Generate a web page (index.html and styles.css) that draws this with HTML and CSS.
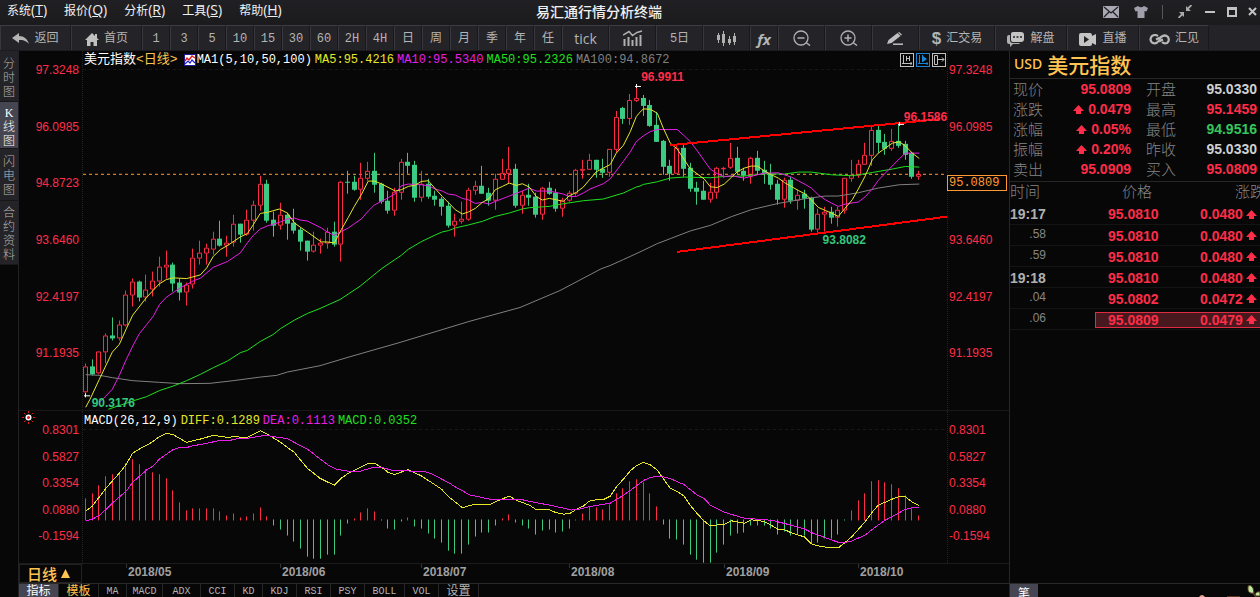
FILE: index.html
```html
<!DOCTYPE html>
<html lang="zh-CN">
<head>
<meta charset="utf-8">
<title>易汇通行情分析终端</title>
<link rel="stylesheet" href="styles.css">
</head>
<body>
<svg class="defs" aria-hidden="true"><symbol id="up" viewBox="0 0 11 9"><path d="M5.500 0 11 6H8V9H3V6H0z" fill="currentColor"/></symbol></svg>
<header class="menubar">
  <nav class="menu">
    <button>系统<span>(<u>T</u>)</span></button>
    <button>报价<span>(<u>Q</u>)</span></button>
    <button>分析<span>(<u>R</u>)</span></button>
    <button>工具<span>(<u>S</u>)</span></button>
    <button>帮助<span>(<u>H</u>)</span></button>
  </nav>
  <h1 class="app-title">易汇通行情分析终端</h1>
  <div class="window-tools">
    <button class="w-mail" aria-label="邮件"><svg width="16" height="12" viewBox="0 0 16 12"><rect width="16" height="12" rx="1" fill="#a9a9b4"/><path d="M1 1l7 6 7-6M1 11l5-5M15 11l-5-5" fill="none" stroke="#222226" stroke-width="1.300"/></svg></button>
    <button class="w-skin" aria-label="皮肤"><svg width="14" height="12" viewBox="0 0 14 12"><path d="M4 0Q7 2.500 10 0L14 2 12.500 5.500 10.500 5V12H3.500V5L1.500 5.500 0 2z" fill="#a09fab"/></svg></button>
    <i class="w-sep"></i>
    <button class="w-restore" aria-label="还原"><svg width="14" height="13" viewBox="0 0 14 13"><path d="M13.500 0 9.500 4M.5 13l4-4" stroke="#aaa" stroke-width="1.800"/><path d="M8 1v5h5zM1 7h5v5z" fill="#aaa"/></svg></button>
    <button class="w-min" aria-label="最小化"><svg width="10" height="2"><rect width="10" height="2" fill="#c2c2c2"/></svg></button>
    <button class="w-max" aria-label="最大化"><svg width="10" height="10"><path d="M1 0v10M9 0v10M0 9h10" stroke="#c2c2c2" stroke-width="2"/><path d="M0 1.500h10" stroke="#c2c2c2" stroke-width="3"/></svg></button>
    <button class="w-close" aria-label="关闭"><svg width="9" height="9"><path d="M1 1l7 7M8 1L1 8" stroke="#c2c2c2" stroke-width="2"/></svg></button>
  </div>
</header>

<div class="toolbar">
  <button class="b-nav"><svg width="17" height="12" viewBox="0 0 17 12"><path d="M0 5 7 0V3C12 3 15.500 6 17 11 14 7.500 11 7 7 7V10z" fill="#b4b4b4"/></svg>返回</button>
  <button class="b-nav"><svg width="14" height="13" viewBox="0 0 14 13"><path d="M7 0 0 7H2V13H5.500V9H8.500V13H12V7H14L12 5V1H10V3z" fill="#c0c0c0"/></svg>首页</button>
  <button>1</button><button>3</button><button>5</button><button>10</button><button>15</button><button>30</button><button>60</button><button>2H</button><button>4H</button>
  <button class="zh">日</button><button class="zh">周</button><button class="zh">月</button><button class="zh">季</button><button class="zh">年</button><button class="zh">任</button>
  <button class="b-mid tick">tick</button>
  <button class="b-mid" aria-label="成交量"><svg width="20" height="16" viewBox="0 0 20 16"><path d="M1.500 16V9M5.500 16V7M9.500 16V10M13.500 16V7M17.500 16V5" stroke="#b0b0b0" stroke-width="2"/><path d="M0 5 6 1.500 9.500 5.500 14 2.500 19 1" fill="none" stroke="#b0b0b0" stroke-width="1.500"/></svg></button>
  <button class="b-mid zh">5日</button>
  <button class="b-mid" aria-label="K线"><svg width="19" height="15" viewBox="0 0 19 15"><path d="M1.500 2v10M6.500 0v15M12.500 5v9M17.500 2v12" stroke="#b0b0b0"/><path d="M1.500 4v5M6.500 3v9M12.500 8v4M17.500 5v6" stroke="#b0b0b0" stroke-width="3"/></svg></button>
  <button class="fx">fx</button>
  <button class="b-mid" aria-label="缩小"><svg width="18" height="16" viewBox="0 0 18 16"><circle cx="8" cy="8" r="7" fill="none" stroke="#b0b0b0" stroke-width="1.300"/><path d="M4.500 8h7M13 12.500l4 3" stroke="#b0b0b0" stroke-width="1.500"/></svg></button>
  <button class="b-mid" aria-label="放大"><svg width="18" height="16" viewBox="0 0 18 16"><circle cx="8" cy="8" r="7" fill="none" stroke="#b0b0b0" stroke-width="1.300"/><path d="M4.500 8h7M8 4.500v7M13 12.500l4 3" stroke="#b0b0b0" stroke-width="1.500"/></svg></button>
  <button class="b-mid" aria-label="画线"><svg width="17" height="13" viewBox="0 0 17 13"><path d="M0 12 1.500 8 10.500 1 13.500 4 4.500 11z" fill="#c0c0c0"/><path d="M11 .5 12 0 15 2.500 14 3.500z" fill="#c0c0c0"/><path d="M6 12.200h10" stroke="#c0c0c0" stroke-width="1.500"/></svg></button>
  <button class="b-trade"><b class="dollar">$</b>汇交易</button>
  <button class="b-link"><svg width="18" height="15" viewBox="0 0 18 15"><path d="M3 3H2Q0 3 0 5v5q0 2 2 2h1v3l3-3h5q2 0 2-1H6Q3 11 3 8z" fill="#b0b0b0"/><path d="M6 0h8q3 0 3 3v4q0 3-3 3h-3l-2 0H6Q4 10 4 8V2Q4 0 6 0z" fill="#c4c4c4"/><path d="M6 5h2M9.500 5h2M13 5h2" stroke="#222" stroke-width="1.500"/></svg>解盘</button>
  <button class="b-link"><svg width="18" height="13" viewBox="0 0 18 13"><path d="M0 2q0-2 2-2h9q2 0 2 2v1l4-2v11l-4-2v1q0 2-2 2H2q-2 0-2-2z" fill="#c4c4c4"/><path d="M5 3v7l5-3.500z" fill="#222227"/></svg>直播</button>
  <button class="b-last"><svg width="21" height="11" viewBox="0 0 21 11"><path d="M9 2Q6 0 3 2 0 5.500 3 8.500 7 11 10 6.500L12 3q4-3 7 0 2 4-1 6-3 1-5-1" fill="none" stroke="#b8b8b8" stroke-width="2.200"/><path d="M7 5.500l4-2M10 7.500l4-2" stroke="#b8b8b8" stroke-width="2"/></svg>汇见</button>
</div>

<div class="workspace">
  <nav class="side-tabs">
    <button class="s1">分时图</button>
    <button class="s2 active">K线图</button>
    <button class="s3">闪电图</button>
    <button class="s4">合约资料</button>
  </nav>

  <main class="charts">
    <section class="pane pane-price">
      <div class="axis axis-left"><span>97.3248</span><span>96.0985</span><span>94.8723</span><span>93.6460</span><span>92.4197</span><span>91.1935</span></div>
      <div class="plot">
        <div class="legend">
          <span class="instrument">美元指数<em>&lt;日线&gt;</em></span>
          <svg class="legend-icon" width="12" height="12" viewBox="0 0 12 12"><rect width="12" height="12" fill="#1a1a9c"/><rect x="1" y="1" width="10" height="10" fill="#fff"/><path d="M1 7 3 4 5 6 8 2 11 4" fill="none" stroke="#e02020" stroke-width="1.400"/><path d="M1 10 4 7 6 9 8 6 11 9" fill="none" stroke="#2020d0" stroke-width="1.200"/></svg>
          <span class="c-white">MA1(5,10,50,100)</span><span class="c-yellow">MA5:95.4216</span><span class="c-magenta">MA10:95.5340</span><span class="c-green">MA50:95.2326</span><span class="c-gray">MA100:94.8672</span>
          <div class="scale-tools">
            <button aria-label="纵轴"><svg width="14" height="14" viewBox="0 0 14 14"><rect x=".5" y=".5" width="13" height="13" fill="none" stroke="#c0c0c0"/><path d="M3.500 2v9M2 10.500h10M6.500 3v5M9.500 3v5M6 5.500h4M11 9v3" stroke="#c0c0c0"/></svg></button>
            <button aria-label="锁定"><svg width="14" height="14" viewBox="0 0 14 14"><rect x=".5" y=".5" width="13" height="13" fill="none" stroke="#1b86d8"/><path d="M3.500 2v9M2 10.500h10M11 9v3M6.500 2v7" stroke="#1b86d8"/><path d="M7 3v6l4-3z" fill="#1b86d8"/></svg></button>
            <button aria-label="平移"><svg width="14" height="14" viewBox="0 0 14 14"><rect x=".5" y=".5" width="13" height="13" fill="none" stroke="#c0c0c0"/><path d="M2.500 2.500h3v9h-3zM5 6.500h7M10 4.500l2 2-2 2" fill="none" stroke="#c0c0c0"/></svg></button>
          </div>
        </div>
        <div class="canvas">
          <svg id="price" viewBox="83 68 864 343" preserveAspectRatio="none"></svg>
          <span class="mark m-high">96.9911</span>
          <span class="mark m-recent">96.1586</span>
          <span class="mark m-dip">93.8082</span>
          <span class="mark m-low">90.3176</span>
        </div>
      </div>
      <div class="axis axis-right"><span>97.3248</span><span>96.0985</span><output class="last-price">95.0809</output><span>93.6460</span><span>92.4197</span><span>91.1935</span></div>
    </section>

    <section class="pane pane-macd">
      <div class="axis axis-left">
        <svg class="sun" width="13" height="13" viewBox="0 0 13 13"><path d="M6.500 0v2M6.500 11v2M0 6.500h2M11 6.500h2M2 2l1.500 1.500M9.500 9.500 11 11M11 2 9.500 3.500M3.500 9.500 2 11" stroke="#e01818"/><circle cx="6.500" cy="6.500" r="3" fill="#fff"/><circle cx="6.500" cy="6.500" r="1.500" fill="#e01818"/></svg>
        <span>0.8301</span><span>0.5827</span><span>0.3354</span><span>0.0880</span><span>-0.1594</span></div>
      <div class="plot">
        <div class="legend"><span class="c-white">MACD(26,12,9)</span><span class="c-yellow">DIFF:0.1289</span><span class="c-magenta">DEA:0.1113</span><span class="c-green">MACD:0.0352</span></div>
        <div class="canvas"><svg id="macd" viewBox="83 430 864 133" preserveAspectRatio="none"></svg></div>
      </div>
      <div class="axis axis-right"><span>0.8301</span><span>0.5827</span><span>0.3354</span><span>0.0880</span><span>-0.1594</span></div>
    </section>

    <div class="time-row">
      <button class="period">日线 <svg width="9" height="9" viewBox="0 0 9 9"><path d="M4.500 0 9 9H0z" fill="#ffc452"/></svg></button>
      <div class="months"><i></i><span>2018/05</span><span>2018/06</span><span>2018/07</span><span>2018/08</span><span>2018/09</span><span>2018/10</span></div>
    </div>

    <nav class="indicator-tabs">
      <button class="wide active">指标</button><button class="wide gold">模板</button><button class="t2">MA</button><button class="t4">MACD</button><button class="t3a">ADX</button><button class="t3">CCI</button><button class="t2">KD</button><button class="t3">KDJ</button><button class="t3">RSI</button><button class="t3">PSY</button><button class="wide">BOLL</button><button class="t3">VOL</button><button class="wide zh">设置</button>
    </nav>
  </main>

  <aside class="quote">
    <h2><small>USD</small>美元指数</h2>
    <dl class="facts">
      <dt>现价</dt><dd class="up">95.0809</dd><dt>开盘</dt><dd>95.0330</dd>
      <dt>涨跌</dt><dd class="up"><svg width="11" height="9"><use href="#up"/></svg>0.0479</dd><dt>最高</dt><dd class="up">95.1459</dd>
      <dt>涨幅</dt><dd class="up"><svg width="11" height="9"><use href="#up"/></svg>0.05%</dd><dt>最低</dt><dd class="down">94.9516</dd>
      <dt>振幅</dt><dd class="up"><svg width="11" height="9"><use href="#up"/></svg>0.20%</dd><dt>昨收</dt><dd>95.0330</dd>
      <dt>卖出</dt><dd class="up">95.0909</dd><dt>买入</dt><dd class="up">95.0809</dd>
    </dl>
    <table class="ticks">
      <thead><tr><th class="col-time">时间</th><th class="col-price">价格</th><th class="col-change">涨跌</th></tr></thead>
      <tbody>
        <tr><td class="minute">19:17</td><td><div>95.0810</div></td><td><div>0.0480<svg width="11" height="9"><use href="#up"/></svg></div></td></tr>
        <tr><td class="second">.58</td><td><div>95.0810</div></td><td><div>0.0480<svg width="11" height="9"><use href="#up"/></svg></div></td></tr>
        <tr><td class="second">.59</td><td><div>95.0810</div></td><td><div>0.0480<svg width="11" height="9"><use href="#up"/></svg></div></td></tr>
        <tr><td class="minute">19:18</td><td><div>95.0810</div></td><td><div>0.0480<svg width="11" height="9"><use href="#up"/></svg></div></td></tr>
        <tr><td class="second">.04</td><td><div>95.0802</div></td><td><div>0.0472<svg width="11" height="9"><use href="#up"/></svg></div></td></tr>
        <tr class="latest"><td class="second">.06</td><td><div>95.0809</div></td><td><div>0.0479<svg width="11" height="9"><use href="#up"/></svg></div></td></tr>
      </tbody>
    </table>
    <footer class="quote-tabs">
      <button>笔</button>
      <svg width="62" height="13" viewBox="0 0 62 13"><path d="M1 13q3-4 6 0z" fill="#f0a090"/><path d="M29 13v-1h13v1z" fill="#5b3418"/><path d="M50 2q3-2 5 2l1 5q-5 1-6-3zM57 10q2-3 5-2v4h-4z" fill="#bfe8a0" stroke="#5d4020"/><path d="M55 9l3 4" stroke="#5d4020" stroke-width="1.500"/></svg>
    </footer>
  </aside>
</div>
<script src="chart.js"></script>
</body>
</html>
```

FILE: styles.css
```css
* { box-sizing: border-box; }
body {
  margin: 0;
  height: 100vh;
  display: flex;
  flex-direction: column;
  overflow: hidden;
  background: #070707;
  color: #b4b4b4;
  font: 12px/16px "Liberation Sans", "Noto Sans CJK SC", sans-serif;
}
button {
  margin: 0;
  padding: 0;
  border: 0;
  background: none;
  color: inherit;
  font: inherit;
  white-space: nowrap;
}
svg { display: block; flex: none; }
.defs { position: absolute; width: 0; height: 0; }

/* menu bar */
.menubar {
  display: grid;
  grid-template-columns: 1fr auto 1fr;
  flex: 0 0 25px;
  align-items: start;
  background: linear-gradient(#202024, #1b1b1d);
  color: #f0f0f0;
}
.menu { display: flex; gap: 17px; padding-left: 7px; }
.menu button { font: 12px/20px "Noto Sans CJK SC", sans-serif; }
.menu span { font: 14px/20px "Open Sans", sans-serif; }
.app-title {
  margin: 0;
  padding-right: 62px;
  font: 500 14px/22px "Noto Sans CJK SC", sans-serif;
}
.window-tools { display: flex; justify-content: flex-end; align-items: center; height: 23px; }
.window-tools button { display: flex; justify-content: center; align-items: center; height: 20px; }
.w-mail { width: 31px; }
.w-skin { width: 29px; }
.w-sep { width: 1px; height: 14px; margin: 0 7px; background: #55555c; }
.w-restore { width: 30px; }
.w-min { width: 20px; }
.w-max { width: 24px; }
.w-close { width: 16px; }

/* toolbar */
.toolbar { display: flex; flex: 0 0 26px; background: #232328; border-bottom: 1px solid #1c1c20; }
.toolbar button {
  display: flex;
  flex: none;
  justify-content: center;
  align-items: center;
  gap: 5px;
  width: 28px;
  border-top: 1px solid #3d3d43;
  border-left: 1px solid #37373d;
  border-right: 1px solid #19191d;
  color: #b4b4b4;
  font: 12px/20px "Liberation Mono", "Noto Sans CJK SC", monospace;
}
.toolbar button:not([aria-label]) { padding-top: 2px; }
.toolbar .b-nav { width: 71px; }
.toolbar .b-mid { width: 47px; }
.toolbar .b-trade { width: 76px; }
.toolbar .b-link { width: 72px; }
.toolbar .b-last { width: 70px; }
.toolbar .tick { font: 14px/20px "Open Sans", sans-serif; }
.toolbar .fx { font: italic bold 15px/18px "Noto Sans", sans-serif; }
.dollar { font: bold 17px/20px "Liberation Sans", sans-serif; }

.workspace { display: flex; flex: 1; min-height: 0; }

/* left tabs */
.side-tabs { display: flex; flex-direction: column; flex: 0 0 19px; border-right: 1px solid #222226; }
.side-tabs button {
  padding: 3px 3px 0;
  background: #232328;
  border-bottom: 1px solid #17171a;
  color: #b4b4b4;
  font: 300 12px/14px "Liberation Serif", "Noto Sans CJK SC", sans-serif;
  white-space: normal;
  word-break: break-all;
}
.s1 { height: 51px; }
.s2 { height: 47px; }
.s3 { height: 52px; }
.s4 { height: 64px; }
.side-tabs .active { background: #464652; color: #fff; }

/* charts */
.charts { display: flex; flex-direction: column; flex: 1; min-width: 0; }
.pane { display: grid; grid-template-columns: 64px 1fr 62px; min-height: 0; }
.pane-price { flex: 360; }
.pane-macd { flex: 152; border-top: 1px solid #171717; }
.axis {
  position: relative;
  display: flex;
  flex-direction: column;
  justify-content: space-between;
  color: #ff2d48;
}
.pane-price .axis { padding-top: 11px; padding-bottom: 49px; }
.pane-macd .axis { padding-top: 11px; padding-bottom: 19px; }
.axis-left { padding-right: 3px; text-align: right; border-right: 1px dotted #242424; }
.axis-right { padding-left: 1px; border-left: 1px dotted #242424; }
.last-price {
  margin: 0 2px 0 -2px;
  padding-left: 1px;
  border: 1px solid #ff9933;
  color: #ff9933;
  font: 12px/14px "Liberation Mono", monospace;
}
.sun { position: absolute; left: 3px; top: 0; }
.plot { display: flex; flex-direction: column; min-width: 0; min-height: 0; }
.legend {
  display: flex;
  flex: 0 0 17px;
  align-items: center;
  gap: 3px;
  padding-left: 1px;
  white-space: nowrap;
  font: 12px/16px "Liberation Mono", "Noto Sans CJK SC", monospace;
}
.pane-price .legend { padding-top: 1px; }
.pane-macd .legend { flex-basis: 18px; padding-top: 2px; }
.instrument { color: #fff; font-size: 13px; margin-right: 3px; }
.instrument em { color: #ffc452; font-style: normal; }
.legend-icon { margin-right: -2px; }
.c-white { color: #fff; }
.c-yellow { color: #e6e62a; }
.c-magenta { color: #e61ee6; }
.c-green { color: #1ee01e; }
.c-gray { color: #808080; }
.scale-tools { display: flex; gap: 2px; margin-left: auto; padding-right: 1px; }
.canvas { position: relative; flex: 1; min-height: 0; }
.canvas svg { width: 100%; height: 100%; }
.canvas svg * { vector-effect: non-scaling-stroke; }
.mark { position: absolute; font-weight: bold; line-height: 12px; color: #ff2d48; }
.m-high { left: 64.600%; top: 1%; }
.m-recent { left: 95%; top: 12.500%; }
.m-dip { left: 85.600%; top: 48.500%; color: #35c67c; }
.m-low { left: 1%; top: 96%; color: #35c67c; }

.time-row { display: flex; flex: 0 0 20px; border-top: 1px solid #1b1b1b; }
.period {
  display: flex;
  flex: 0 0 63px;
  align-items: center;
  gap: 4px;
  padding-left: 7px;
  margin-right: 1px;
  border: 1px solid #222;
  color: #ffc452;
  font: 500 15px/14px "Noto Sans CJK SC", sans-serif;
}
.months {
  display: grid;
  flex: 1;
  grid-template-columns: 43fr 154fr 141fr 148fr 155fr 134fr 151fr;
  color: #a0a0a0;
  font-weight: bold;
}
.months span { padding-left: 2px; background: linear-gradient(#333, #333) no-repeat left top / 1px 4px; }

.indicator-tabs { display: flex; flex: 0 0 14px; overflow: hidden; border-top: 1px solid #2a2a2a; }
.indicator-tabs button {
  flex: none;
  height: 16px;
  border-right: 1px solid #262626;
  color: #b4b4b4;
  font: 10px/16px "Liberation Mono", "Noto Sans CJK SC", monospace;
}
.indicator-tabs .wide { width: 40px; }
.indicator-tabs .t2 { width: 28px; }
.indicator-tabs .t3 { width: 34px; }
.indicator-tabs .t3a { width: 38px; }
.indicator-tabs .t4 { width: 36px; }
.indicator-tabs .active, .indicator-tabs .gold, .indicator-tabs .zh { font-size: 12px; }
.indicator-tabs .active { background: #464652; color: #fff; }
.indicator-tabs .gold { color: #ffc452; }

/* quote panel */
.quote { display: flex; flex-direction: column; flex: 0 0 251px; overflow: hidden; border-left: 1px solid #262626; }
.quote h2 {
  display: flex;
  gap: 5px;
  margin: 0;
  padding-left: 4px;
  border-bottom: 1px solid #262626;
  color: #ffc452;
  font: 500 21px/27px "Noto Sans CJK SC", sans-serif;
}
.quote small { font: 500 14px/26px "Noto Sans", sans-serif; }
.facts {
  display: grid;
  grid-template-columns: 36px 82px 47px 1fr;
  grid-auto-rows: 20px;
  margin: 0;
  padding: 0 3px 2px;
  border-bottom: 1px solid #262626;
}
.facts dt { color: #858585; font: 300 15px/19px "Noto Sans CJK SC", sans-serif; }
.facts dt:nth-of-type(even) { padding-left: 15px; }
.facts dd {
  display: flex;
  justify-content: flex-end;
  align-items: center;
  gap: 4px;
  margin: 0;
  color: #d0d0d0;
  font: bold 14px/22px "Liberation Sans", sans-serif;
}
.facts .up { color: #ff2d48; }
.facts .down { color: #35c65c; }
.ticks { width: 275px; border-collapse: collapse; table-layout: fixed; }
.ticks th { height: 21px; padding: 0; color: #858585; text-align: left; vertical-align: top; font: 300 15px/18px "Noto Sans CJK SC", sans-serif; }
.ticks .col-time { width: 85px; }
.ticks .col-price { width: 92px; padding-left: 27px; }
.ticks .col-change { padding-left: 48px; }
.ticks td {
  height: 21px;
  padding: 2px 0 0;
  border-bottom: 1px solid #141414;
  color: #ff2d48;
  font: bold 14px/14px "Liberation Sans", sans-serif;
}
.ticks td div { display: flex; align-items: center; gap: 3px; height: 16px; padding-left: 12px; border: 1px solid transparent; }
.ticks .minute { color: #b0b0b0; }
.ticks .second { padding: 0 49px 2px 0; color: #858585; text-align: right; font: 12px/14px "Liberation Sans", sans-serif; }
.ticks .latest td div { background: #47191f; border-color: #e02c42; border-left-width: 0; border-right-width: 0; }
.ticks .latest td:nth-child(2) div { border-left-width: 1px; }
.ticks .latest td:nth-child(3) div { padding-left: 13px; }
.quote-tabs { display: flex; justify-content: space-between; height: 14px; margin-top: auto; overflow: hidden; border-top: 1px solid #2a2a2a; }
.quote-tabs button { width: 28px; height: 17px; background: #464652; color: #fff; font: 12px/16px "Noto Sans CJK SC", sans-serif; }
```

FILE: chart.js
```js
// Chart geometry is kept in thirds of a unit; each run has its own origin.
const RED = '#ff2d48', GREEN = '#3ccb82';
const NS = 'http://www.w3.org/2000/svg';
const slot = i => Math.round(85 + i * 6.718) + 0.5;

function add(svg, tag, attrs) {
  const el = document.createElementNS(NS, tag);
  for (const k in attrs) el.setAttribute(k, attrs[k]);
  svg.appendChild(el);
}
function line(svg, color, runs, width = 1) {
  const pts = runs.map(([ox, oy, s]) => s.trim().split(' ').map(p => {
    const [x, y] = p.split(',').map(Number);
    return (ox + x / 3).toFixed(1) + ',' + (oy + y / 3).toFixed(1);
  }).join(' ')).join(' ');
  add(svg, 'polyline', { points: pts, fill: 'none', stroke: color, 'stroke-width': width, 'shape-rendering': 'crispEdges' });
}
function rule(svg, x1, y1, x2, y2, color, width, dash) {
  const a = { x1, y1, x2, y2, stroke: color, 'stroke-width': width };
  if (dash) a['stroke-dasharray'] = dash;
  add(svg, 'line', a);
}

// high, low, body top, body bottom, direction
const candles = [
  [50, `942 1035 951 1028 R|930 978 951 975 G|906 975 906 973 R|852 942 858 908 R|803 872 857 866 G|813 872 825 866 R|723 830 736 827 R|687 770 696 738 R|693 755 696 743 G|675 755 720 743 R|666 740 693 721 R|621 710 651 695 R|603 687 645 653 R|639 727 645 701 G|687 752 699 728 G|700 768 706 728 R|597 717 625 706 R|573 645 609 626 R|582 645 594 611 R|546 615 567 599 R|513 590 567 588 G|558 621 579 587 R|495 591 522 580 R|522 578 522 555 G|480 557 510 554 R|453 543 465 512 R|378 483 402 467 R|390 518 402 512 G|487 560 510 527 G|459 540 495 528 R|490 570 495 521 G|477 551 519 543 G|535 603 540 575 G|573 632 573 605 G|546 608 585 605 R`],
  [70, `507 552 518 527 R|474 537 486 521 R|456 530 486 525 G|333 576 336 524 R|303 372 336 338 G|318 363 336 360 G|279 390 324 359 R|276 333 303 326 R|249 369 303 345 G|339 402 342 396 G|363 432 393 423 G|354 438 366 422 R|267 390 276 368 R|249 312 276 288 G|273 396 285 384 G|303 396 342 383 R|327 387 342 381 G|363 408 378 390 G|381 438 387 411 G|396 474 408 468 G|432 501 453 467 R|396 462 447 455 R|354 453 360 450 R|333 375 348 362 R|288 372 348 372 G|354 408 369 393 G|312 420 327 392 R|267 330 309 329 R|231 342 297 311 R|282 414 297 408 G|363 432 375 407 R|342 408 375 384 G|369 444 381 435 G|351 450 354 434 R|336 375 354 372 G|357 426 369 417 G|384 441 390 416 R|363 396 369 392 R|297 378 300 371 R|270 327 298 302 R|252 300 270 299 R|270 324 270 300 G|267 324 297 309 G|237 321 237 308 R|123 249 141 239 R|111 162 114 147 G|72 165 90 146 R|45 96 84 92 R`],
  [60, `105 168 114 138 G|120 201 135 198 G|156 246 195 246 G|240 345 243 321 G|300 363 318 342 G|255 343 264 341 R|252 351 264 327 G|309 396 324 387 G|366 435 384 396 G|363 420 393 420 G|369 429 396 419 R|321 417 324 398 R|321 354 324 326 R|249 327 294 325 R|261 345 294 336 G|324 363 333 348 G|291 372 294 350 R|273 345 294 333 G|303 372 330 342 G|312 390 342 375 G|360 435 372 420 G|354 444 360 419 R|351 432 360 424 G|390 450 405 422 R|390 447 402 417 G|411 516 414 510 G|447 518 462 509 R|441 516 456 464 R|441 492 456 474 G|441 501 450 473 R|354 462 354 452 R|300 366 345 356 R|300 354 312 347 R|249 315 285 314 R|198 318 210 287 R|198 279 210 249 G|222 285 246 267 G|207 273 243 266 R|195 264 243 258 G|243 300 252 285 G|276 357 279 351 G|333 360 342 350 R`]
];

const price = document.getElementById('price');
rule(price, 83, 69.5, 947, 69.5, '#191919', 1, '3 3');
rule(price, 83, 174.5, 947, 174.5, '#ff9933', 1, '3 3');
let n = 0;
for (const [oy, text] of candles) {
  for (const row of text.split('|')) {
    const f = row.split(' '), x = slot(n++);
    const [hi, lo, top, bot] = f.slice(0, 4).map(v => Math.round(oy + v / 3));
    const h = Math.max(bot - top, 1);
    if (f[4] === 'R') {
      rule(price, x, hi, x, top, RED, 1);
      rule(price, x, top + h, x, lo, RED, 1);
      add(price, 'rect', { x: x - 2, y: top + 0.5, width: 4, height: Math.max(h - 1, 0.5), fill: 'none', stroke: RED });
    } else {
      rule(price, x, hi, x, lo, GREEN, 1);
      add(price, 'rect', { x: x - 2.5, y: top, width: 5, height: h, fill: GREEN });
    }
  }
}
line(price, '#808080', [
  [0, 50, '257,976 300,978 337,985 398,994 478,999 540,1003 630,1002 700,994 781,983 830,978 862,968 960,949 1050,922 1200,879 1410,815 1560,774 1680,723'],
  [300, 70, '903,598 930,588 970,570 1020,547'],
  [620, 60, '112,552 151,537 211,514 271,497 334,471 394,450 475,431 556,417 616,409 655,409 715,399 775,385 838,375 898,373']]);
line(price, '#1ee01e', [
  [0, 50, '325,1080 398,1055 440,1042 478,1024 520,1010 560,994 601,975 640,955 682,935 721,910 742,903 781,876 820,855 841,838 883,812 922,792 960,777'],
  [300, 70, '120,690 180,650 244,598 286,569 304,557 325,539 364,516 406,496 427,487 445,483 466,475 505,466 547,455 586,440 628,430 667,418 688,414 748,410 790,402 850,393 910,388 970,370 1009,352 1020,349'],
  [620, 60, '70,374 112,366 151,355 193,352 271,354 313,350 373,349 433,342 493,343 535,337 574,337 634,345 697,348 757,338 817,328 856,320 898,322']]);
line(price, '#e61ee6', [
  [0, 50, '300,1058 337,1020 358,978 379,930 398,890 418,853 440,825 460,800 478,766 499,743 541,715 580,694 601,686 640,653 682,636 721,610 742,580 760,557 781,538 802,529 841,517 862,508 883,505'],
  [300, 70, '0,451 22,454 64,475 82,487 103,497 124,486 145,475 184,448 205,424 223,406 265,384 286,372 304,348 325,343 364,345 385,348 406,358 427,364 445,373 466,376 487,386 505,390 526,401 547,398 568,403 586,395 628,379 667,364 688,355 709,364 748,364 790,373 808,380 829,380 850,370 870,358 910,342 931,327 949,303 970,275 991,246 1009,215'],
  [620, 60, '70,228 91,215 112,209 172,209 193,228 211,245 232,273 253,303 271,328 292,342 313,351 334,348 373,355 412,345 433,340 475,339 493,345 514,352 535,363 556,374 574,385 595,405 616,420 634,430 655,440 676,433 715,427 736,411 757,387 775,362 796,340 838,297 856,280 898,280']]);
line(price, '#e6e62a', [
  [0, 50, '257,1074 270,1050 298,990 337,908 358,885 379,838 398,797 440,743 478,703 499,690 520,685 560,687 601,676 620,655 640,620 661,600 682,588 721,562 742,552 760,525 781,491 802,488 838,478 862,490 883,519'],
  [300, 70, '0,472 22,487 64,517 82,517 103,520 124,480 145,443 163,410 184,375 205,334 223,334 244,342 286,364 304,360 325,350 346,346 364,335 385,333 406,357 427,380 445,398 466,420 487,433 505,427 526,416 547,398 568,386 586,360 607,350 628,340 649,347 667,342 688,352 709,380 727,391 748,386 769,390 790,395 808,378 829,368 850,352 889,306 931,284 949,250 970,227 991,185 1009,140'],
  [620, 60, '60,157 70,147 91,148 112,160 130,205 151,250 172,268 193,300 211,327 253,358 271,381 292,383 313,373 334,353 352,336 373,325 394,319 412,319 433,333 454,345 475,355 493,368 514,380 535,392 556,403 574,420 595,443 616,452 634,460 655,470 676,445 697,420 715,388 736,348 757,300 775,280 796,265 817,250 838,246 856,258 877,280 898,296']]);
line(price, '#ff0000', [[620, 60, '150,256 960,178']], 2);
line(price, '#ff0000', [[620, 60, '172,577 980,471']], 2);
for (const [x, y] of [[636, 86], [899, 124], [85, 396]]) {
  rule(price, x - 1, y + 0.5, x + 5, y + 0.5, '#fff', 1);
  rule(price, x + 0.5, y - 2, x + 0.5, y + 2, '#fff', 1);
}

const macd = document.getElementById('macd');
rule(macd, 83, 430.5, 947, 430.5, '#191919', 1, '3 3');
const bars = [297,282,258,231,225,219,192,180,195,210,219,225,237,273,309,333,327,327,327,327,336,348,342,354,351,342,324,351,378,390,408,426,447,471,477,477,465,465,408,372,357,339,327,336,363,387,390,366,354,381,387,402,417,429,453,462,462,435,411,399,399,378,357,345,369,378,387,405,393,390,399,396,387,360,342,322,324,330,315,282,267,246,240,249,282,321,375,417,420,435,465,480,489,489,459,435,408,402,399,378,378,378,387,405,396,408,405,408,432,429,417,417,405,363,333,303,282,246,243,249,255,267,288,327,348];
bars.forEach((v, i) => {
  const x = slot(i), up = v < 361;
  rule(macd, x, up ? 521 : 520, x, Math.round(400 + v / 3), up ? RED : GREEN, 1);
});
const widen = s => s.split(' ').map(p => {
  const [x, y] = p.split(',');
  return (x * 1.014).toFixed(0) + ',' + y;
}).join(' ');
line(macd, '#e6e62a', [
  [0, 400, '257,335 277,320 320,264 358,222 379,195 398,162 418,150 455,130 478,113 499,103 520,107 560,130 601,120 640,109 682,115 700,113 742,115 781,95 802,106 841,129 883,160 922,207 960,237 1003,258 1024,237 1045,222 1105,193 1125,193 1150,208 1165,220 1185,226 1224,211 1266,231 1325,270 1345,291 1387,325 1425,314'],
  [480, 400, widen('0,314 28,316 46,307 87,290 108,303 146,317 167,331 205,331 226,340 247,344 264,343 285,330 306,320 323,305 344,301 365,301 386,290 404,262 424,240 445,215 462,200 483,190 504,197 525,213 542,238 563,267 584,277 604,290 622,318 643,343 664,365 681,379 723,374 744,364 782,371 803,361 841,366 862,377 883,390 900,390 921,400 960,412 980,433 1001,439 1039,445 1060,445 1081,428 1102,410 1140,366 1161,338 1178,318 1220,299 1241,292 1258,292 1279,308 1298,318')]]);
line(macd, '#e61ee6', [
  [0, 400, '257,364 277,359 298,348 320,328 337,311 379,275 398,249 440,212 460,200 478,180 520,151 541,145 561,145 580,140 619,133 655,125 690,124 712,119 742,118 781,111 805,110 862,119 883,130 925,152 960,179 985,198 1010,210 1050,217 1080,216 1115,206 1145,205 1180,214 1275,217 1300,226 1345,250 1375,268 1410,287'],
  [480, 400, widen('0,293 28,299 108,299 130,302 167,310 215,319 247,326 270,332 290,330 323,322 386,311 404,300 424,288 445,273 483,244 504,235 530,230 563,238 604,256 643,287 664,298 681,317 723,338 761,350 782,356 841,361 862,362 921,377 960,388 980,399 1039,421 1060,428 1081,428 1102,424 1140,406 1178,377 1199,362 1220,351 1258,330 1280,325 1298,325')]]);
```
